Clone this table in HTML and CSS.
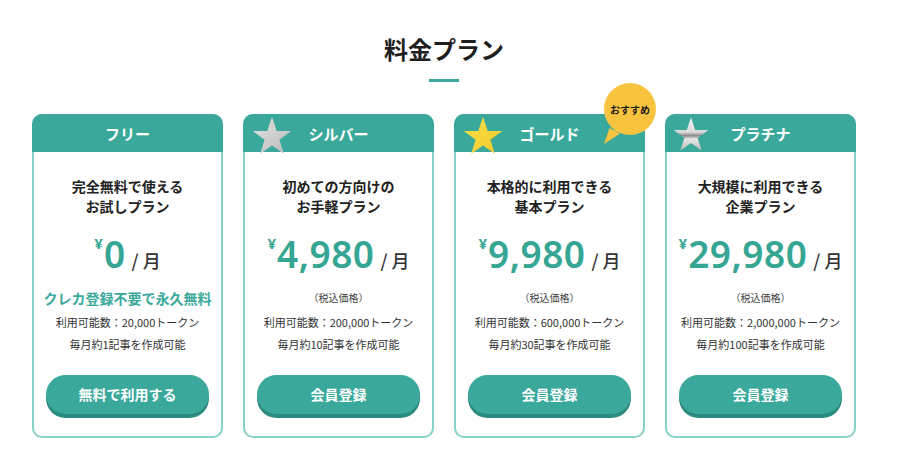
FILE: index.html
```html
<!DOCTYPE html>
<html lang="ja">
<head>
<meta charset="utf-8">
<title>料金プラン</title>
<link rel="stylesheet" href="styles.css">
</head>
<body>
<div class="page">
  <h2 class="title">料金プラン</h2>
  <div class="title-line"></div>
  <div class="plans">
    <div class="card">
      <div class="card-head">フリー</div>
      <div class="card-body">
        <p class="desc">完全無料で使える<br>お試しプラン</p>
        <div class="price"><span class="yen">¥</span><span class="num">0</span><span class="per">/ 月</span></div>
        <p class="note free">クレカ登録不要で永久無料</p>
        <p class="info">利用可能数：20,000トークン<br>毎月約1記事を作成可能</p>
      </div>
      <a class="btn">無料で利用する</a>
    </div>
    <div class="card">
      <div class="card-head">シルバー</div>
      <svg class="star" width="40" height="38" viewBox="0 0 100 95"><defs><linearGradient id="gs" x1="0" y1="0" x2="1" y2="1"><stop offset="0" stop-color="#e2e2e2"/><stop offset="0.5" stop-color="#cfcfcf"/><stop offset="1" stop-color="#b8b8b8"/></linearGradient></defs><polygon points="50,0 61.8,35 98,35 68.5,57 79.4,92 50,71 20.6,92 31.5,57 2,35 38.2,35" fill="url(#gs)"/></svg>
      <div class="card-body">
        <p class="desc">初めての方向けの<br>お手軽プラン</p>
        <div class="price"><span class="yen">¥</span><span class="num">4,980</span><span class="per">/ 月</span></div>
        <p class="note">（税込価格）</p>
        <p class="info">利用可能数：200,000トークン<br>毎月約10記事を作成可能</p>
      </div>
      <a class="btn">会員登録</a>
    </div>
    <div class="card">
      <div class="card-head">ゴールド</div>
      <svg class="star" width="40" height="38" viewBox="0 0 100 95"><defs><linearGradient id="gg" x1="0" y1="0" x2="1" y2="1"><stop offset="0" stop-color="#fbe04a"/><stop offset="1" stop-color="#f2c92a"/></linearGradient></defs><polygon points="50,0 61.8,35 98,35 68.5,57 79.4,92 50,71 20.6,92 31.5,57 2,35 38.2,35" fill="url(#gg)"/></svg>
      <div class="badge">おすすめ</div>
      <div class="card-body">
        <p class="desc">本格的に利用できる<br>基本プラン</p>
        <div class="price"><span class="yen">¥</span><span class="num">9,980</span><span class="per">/ 月</span></div>
        <p class="note">（税込価格）</p>
        <p class="info">利用可能数：600,000トークン<br>毎月約30記事を作成可能</p>
      </div>
      <a class="btn">会員登録</a>
    </div>
    <div class="card">
      <div class="card-head">プラチナ</div>
      <svg class="star plat" width="36" height="35" viewBox="0 0 100 95"><defs><linearGradient id="gp" x1="0" y1="0" x2="0" y2="1"><stop offset="0" stop-color="#f4f4f4"/><stop offset="0.45" stop-color="#d8d8d8"/><stop offset="0.55" stop-color="#8a8a8a"/><stop offset="0.65" stop-color="#e6e6e6"/><stop offset="1" stop-color="#bdbdbd"/></linearGradient></defs><polygon points="50,0 61.8,35 98,35 68.5,57 79.4,92 50,71 20.6,92 31.5,57 2,35 38.2,35" fill="url(#gp)"/></svg>
      <div class="card-body">
        <p class="desc">大規模に利用できる<br>企業プラン</p>
        <div class="price"><span class="yen">¥</span><span class="num">29,980</span><span class="per">/ 月</span></div>
        <p class="note">（税込価格）</p>
        <p class="info">利用可能数：2,000,000トークン<br>毎月約100記事を作成可能</p>
      </div>
      <a class="btn">会員登録</a>
    </div>
  </div>
</div>
</body>
</html>
```

FILE: styles.css
```css
html, body {
  margin: 0;
  padding: 0;
  background: #ffffff;
}
body {
  font-family: "Noto Sans CJK JP", "Noto Sans", sans-serif;
  color: #222222;
}
.page {
  width: 824px;
  margin-left: 32px;
  padding-top: 33px;
}
.title {
  margin: 0;
  font-size: 24px;
  line-height: 32px;
  font-weight: 700;
  text-align: center;
  color: #1e1e1e;
}
.title-line {
  width: 30px;
  height: 3px;
  background: #3aa99b;
  margin: 14px auto 0;
}
.plans {
  display: grid;
  grid-template-columns: repeat(4, 191px);
  gap: 20px;
  margin-top: 32px;
}
.card {
  position: relative;
  box-sizing: border-box;
  height: 324px;
  border: 2px solid #88d1c7;
  border-radius: 10px;
  display: flex;
  flex-direction: column;
  padding-bottom: 22px;
}
.card-head {
  margin: -2px -2px 0;
  height: 38px;
  background: #3aa99b;
  border-radius: 10px 10px 0 0;
  color: #ffffff;
  font-size: 15px;
  font-weight: 700;
  display: flex;
  align-items: center;
  justify-content: center;
}
.star {
  position: absolute;
  left: 7px;
  top: 1px;
}
.star.plat {
  left: 6px;
  top: 1px;
}
.badge {
  position: absolute;
  left: 148px;
  top: -33px;
  width: 52px;
  height: 52px;
  border-radius: 50%;
  background: #f8c33f;
  color: #1a1a1a;
  font-size: 10px;
  font-weight: 700;
  display: flex;
  align-items: center;
  justify-content: center;
  z-index: 2;
}
.badge::after {
  content: "";
  position: absolute;
  left: 0;
  bottom: -9px;
  width: 16px;
  height: 16px;
  background: #f8c33f;
  clip-path: polygon(35% 0, 100% 35%, 0 100%);
}
.card-body {
  padding-top: 24px;
  text-align: center;
}
.desc {
  margin: 0;
  font-size: 14px;
  line-height: 20px;
  font-weight: 700;
  color: #222222;
}
.price {
  margin-top: 9px;
  height: 36px;
  line-height: 36px;
  color: #36a694;
  white-space: nowrap;
}
.yen {
  font-family: "Noto Sans", sans-serif;
  font-size: 15px;
  font-weight: 700;
  vertical-align: 19px;
  margin-right: 1px;
}
.num {
  font-family: "Noto Sans", sans-serif;
  font-size: 37px;
  font-weight: 600;
  letter-spacing: 0.5px;
}
.per {
  font-size: 18px;
  font-weight: 500;
  color: #333333;
  margin-left: 6px;
}
.note {
  margin: 27px 0 0;
  height: 20px;
  font-size: 10px;
  line-height: 20px;
  color: #444444;
}
.note.free {
  font-size: 14px;
  font-weight: 700;
  color: #3aa99b;
}
.info {
  margin: 3px 0 0;
  font-size: 11px;
  line-height: 22px;
  color: #333333;
}
.btn {
  display: block;
  margin: auto 12px 0;
  height: 39px;
  line-height: 39px;
  border-radius: 20px;
  background: #3aa99b;
  box-shadow: 0 4px 0 #2b8b7e;
  color: #ffffff;
  font-size: 14px;
  font-weight: 700;
  text-align: center;
}
```
